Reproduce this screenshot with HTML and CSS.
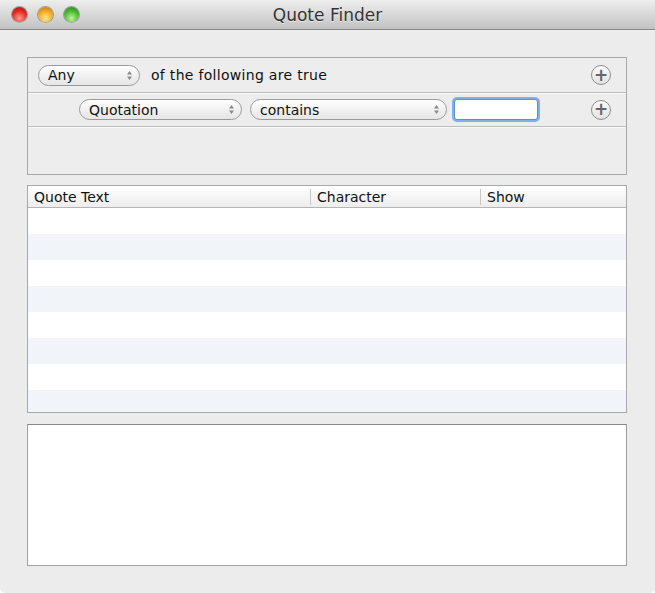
FILE: index.html
```html
<!DOCTYPE html>
<html lang="en">
<head>
    <meta charset="UTF-8">
    <meta name="viewport" content="width=device-width, initial-scale=1.0">
    <title>Quote Finder</title>
    <link rel="stylesheet" href="styles.css">
</head>
<body>
    <div class="window">
        <!-- title bar -->
        <div class="titlebar">
            <div class="lights">
                <span class="light red"></span>
                <span class="light yellow"></span>
                <span class="light green"></span>
            </div>
            <div class="title">Quote Finder</div>
        </div>

        <div class="content">
            <!-- predicate editor -->
            <div class="predicates">
                <div class="row">
                    <div class="popup popup-any"><span>Any</span><svg class="stepper" width="7" height="11" viewBox="0 0 7 11"><path d="M3.5 1 L6 4.5 H1 Z M3.5 10 L6 6.5 H1 Z" fill="#8a8a8a"/></svg></div>
                    <span class="label">of the following are true</span>
                    <span class="plus">+</span>
                </div>
                <div class="row row-sub">
                    <div class="popup popup-field"><span>Quotation</span><svg class="stepper" width="7" height="11" viewBox="0 0 7 11"><path d="M3.5 1 L6 4.5 H1 Z M3.5 10 L6 6.5 H1 Z" fill="#8a8a8a"/></svg></div>
                    <div class="popup popup-op"><span>contains</span><svg class="stepper" width="7" height="11" viewBox="0 0 7 11"><path d="M3.5 1 L6 4.5 H1 Z M3.5 10 L6 6.5 H1 Z" fill="#8a8a8a"/></svg></div>
                    <input class="field" type="text">
                    <span class="plus">+</span>
                </div>
                <div class="empty"></div>
            </div>

            <!-- results table -->
            <div class="table">
                <div class="thead">
                    <div class="th th-quote">Quote Text</div>
                    <div class="th th-char">Character</div>
                    <div class="th th-show">Show</div>
                </div>
                <div class="tbody">
                    <div class="tr"></div>
                    <div class="tr alt"></div>
                    <div class="tr"></div>
                    <div class="tr alt"></div>
                    <div class="tr"></div>
                    <div class="tr alt"></div>
                    <div class="tr"></div>
                    <div class="tr alt"></div>
                </div>
            </div>

            <!-- detail text -->
            <div class="textview"></div>
        </div>
    </div>
</body>
</html>
```

FILE: styles.css
```css
html, body{
    margin: 0;
    padding: 0;
    background: #fff;
}
.window{
    width: 655px;
    height: 593px;
    display: flex;
    flex-direction: column;
    background: #ececec;
    border-radius: 0 0 5px 5px;
    overflow: hidden;
    font-family: "DejaVu Sans", "Liberation Sans", sans-serif;
    color: #111;
}
.titlebar{
    height: 29px;
    flex: none;
    display: flex;
    align-items: center;
    position: relative;
    background: linear-gradient(#eeeeee, #d6d6d6 55%, #c2c2c2);
    border-bottom: 1px solid #8a8a8a;
}
.lights{
    display: flex;
    gap: 11px;
    padding-left: 12px;
}
.light{
    width: 15px;
    height: 15px;
    border-radius: 50%;
    box-shadow: 0 0 0 1px rgba(0,0,0,0.3), 0 1px 1px rgba(255,255,255,0.6);
}
.red{ background: radial-gradient(circle at 50% 75%, #ff9a90, #e02a20 55%, #a01010); }
.yellow{ background: radial-gradient(circle at 50% 75%, #ffe890, #f0a820 55%, #b07010); }
.green{ background: radial-gradient(circle at 50% 75%, #c0f49a, #48b830 55%, #207a18); }
.title{
    position: absolute;
    left: 0;
    right: 0;
    text-align: center;
    font-size: 17px;
    color: #333;
    text-shadow: 0 1px 0 rgba(255,255,255,0.6);
}
.content{
    flex: 1;
    display: flex;
    flex-direction: column;
    padding: 27px 28px 27px 27px;
}
.predicates{
    border: 1px solid #a8a8a8;
    background: #ededed;
    height: 116px;
    display: flex;
    flex-direction: column;
}
.row{
    height: 34px;
    display: flex;
    align-items: center;
    padding-left: 10px;
    padding-right: 15px;
    border-bottom: 1px solid #bdbdbd;
    box-shadow: 0 1px 0 #f8f8f8;
    font-size: 14px;
}
.row-sub{
    padding-left: 51px;
    height: 33px;
}
.popup{
    height: 19px;
    border: 1px solid #9a9a9a;
    border-radius: 11px;
    background: linear-gradient(#ffffff, #f1f1f1 50%, #e6e6e6);
    display: flex;
    align-items: center;
    justify-content: space-between;
    padding: 0 6px 0 9px;
    box-sizing: content-box;
    font-size: 14px;
    color: #111;
}
.stepper{
    display: block;
}
.popup-any{ width: 85px; }
.popup-field{ width: 146px; }
.popup-op{ width: 180px; margin-left: 8px; }
.label{
    margin-left: 11px;
    letter-spacing: 0.3px;
}
.field{
    width: 82px;
    height: 19px;
    margin-left: 7px;
    border: 1px solid #5a8fd0;
    box-shadow: 0 0 0 2px #80b0e8;
    border-radius: 3px;
    padding: 0;
    background: #fff;
}
.plus{
    margin-left: auto;
    width: 18px;
    height: 18px;
    border: 1px solid #8e8e8e;
    border-radius: 50%;
    background: linear-gradient(#fbfbfb, #e2e2e2);
    display: flex;
    align-items: center;
    justify-content: center;
    font-size: 17px;
    font-weight: bold;
    line-height: 1;
    color: #666;
}
.empty{
    flex: 1;
}
.table{
    margin-top: 10px;
    height: 226px;
    border: 1px solid #a8a8a8;
    background: #fff;
    overflow: hidden;
}
.thead{
    display: flex;
    height: 21px;
    border-bottom: 1px solid #b5b5b5;
    background: linear-gradient(#ffffff, #ededed);
    font-size: 14px;
    align-items: center;
}
.th{
    padding-left: 6px;
    box-sizing: border-box;
}
.th-quote{ width: 282px; }
.th-char{ width: 170px; border-left: 1px solid #c8c8c8; }
.th-show{ flex: 1; border-left: 1px solid #c8c8c8; }
.tr{
    height: 26px;
}
.tr.alt{
    background: #f1f5fa;
}
.textview{
    margin-top: 11px;
    flex: 1;
    background: #fff;
    border: 1px solid #a0a0a0;
    border-top-color: #8a8a8a;
}
```
